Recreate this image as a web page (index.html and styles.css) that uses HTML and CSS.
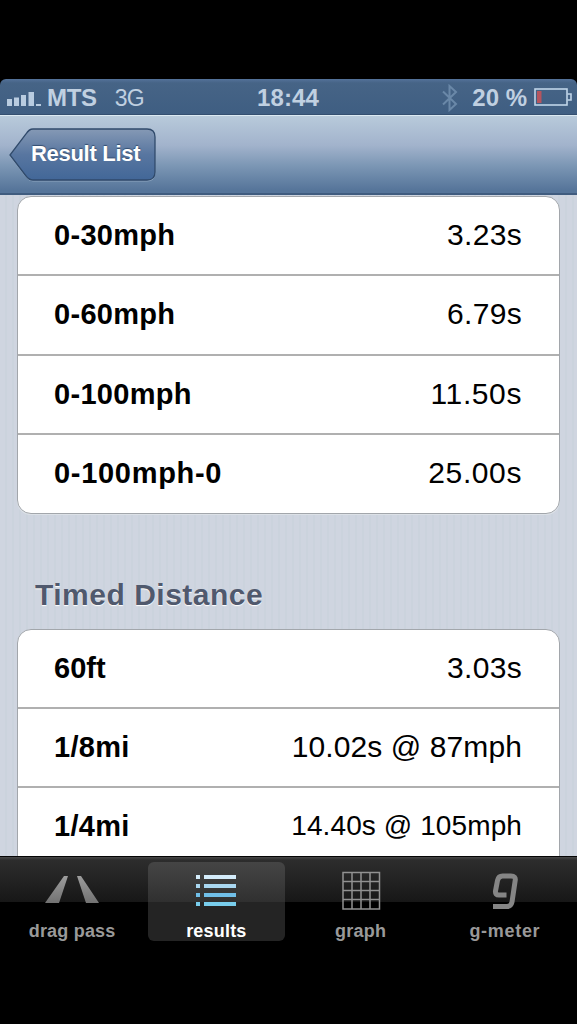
FILE: index.html
```html
<!DOCTYPE html>
<html lang="en">
<head>
    <meta charset="UTF-8">
    <meta name="viewport" content="width=device-width, initial-scale=1.0">
    <title>Results</title>
    <link rel="stylesheet" href="styles.css">
</head>
<body>

    <div class="phone">

        <!-- Status bar -->
        <div class="status">
            <div class="status-left">
                <svg class="signal" width="35" height="16" viewBox="0 0 35 16">
                    <path d="M0 8h5v7H0zM7 6.500h5V15H7zM14 4h5v11h-5zM21.500 1h5.500v14h-5.500zM29 13h5v2h-5z" fill="#b9cce0"/>
                </svg>
                <span class="carrier">MTS</span>
                <span class="network">3G</span>
            </div>
            <span class="clock">18:44</span>
            <div class="status-right">
                <svg class="bluetooth" width="16" height="28" viewBox="0 0 16 28">
                    <path d="M1 7.500l13 12.500-6.500 6V2L14 8 1 20.500" fill="none" stroke="#6a88a8" stroke-width="2"/>
                </svg>
                <span class="percent">20 %</span>
                <svg class="battery" width="38" height="18" viewBox="0 0 38 18">
                    <rect x="1" y="1" width="32" height="16" fill="none" stroke="#c0d5e9" stroke-width="1.600"/>
                    <path d="M33.500 6h3.500v6h-3.500" fill="none" stroke="#c0d5e9" stroke-width="1.600"/>
                    <rect x="3" y="3" width="4.500" height="12" fill="#b5555f"/>
                </svg>
            </div>
        </div>

        <!-- Navigation bar -->
        <div class="navbar">
            <button class="back">
                <svg class="back-shape" width="148" height="54" viewBox="0 0 148 54">
                    <defs>
                        <linearGradient id="backFill" x1="0" y1="0" x2="0" y2="1">
                            <stop offset="0" stop-color="#8599b5"/>
                            <stop offset="0.500" stop-color="#5876a0"/>
                            <stop offset="1" stop-color="#426798"/>
                        </linearGradient>
                    </defs>
                    <path d="M24 2H138Q146 2 146 10V45Q146 53 138 53H24Q20 53 17 49L1 28 17 7Q20 2 24 2Z" fill="none" stroke="#a9bdd2" stroke-opacity="0.600"/>
                    <path d="M24 1H138Q146 1 146 9V44Q146 52 138 52H24Q20 52 17 48L1 27 17 6Q20 1 24 1Z" fill="url(#backFill)" stroke="#304a6b" stroke-width="1.300"/>
                </svg>
                <span class="back-label">Result List</span>
            </button>
        </div>

        <!-- Results -->
        <div class="content">
            <div class="group">
                <div class="row"><span class="label">0-30mph</span><span class="value">3.23s</span></div>
                <div class="row"><span class="label">0-60mph</span><span class="value">6.79s</span></div>
                <div class="row"><span class="label">0-100mph</span><span class="value long">11.50s</span></div>
                <div class="row"><span class="label stop">0-100mph-0</span><span class="value long">25.00s</span></div>
            </div>
            <h2 class="heading">Timed Distance</h2>
            <div class="group">
                <div class="row"><span class="label distance">60ft</span><span class="value">3.03s</span></div>
                <div class="row"><span class="label">1/8mi</span><span class="value speed">10.02s @ 87mph</span></div>
                <div class="row"><span class="label">1/4mi</span><span class="value small">14.40s @ 105mph</span></div>
                <div class="row"></div>
            </div>
        </div>

        <!-- Tab bar -->
        <div class="tabbar">
            <div class="tab">
                <svg class="icon" width="56" height="42" viewBox="0 0 56 42">
                    <defs>
                        <linearGradient id="grey" x1="0" y1="0" x2="0" y2="1">
                            <stop offset="0" stop-color="#9d9d9d"/>
                            <stop offset="1" stop-color="#727272"/>
                        </linearGradient>
                    </defs>
                    <path d="M20 8h4L15 35H1zM33 8h4l18 27H42z" fill="url(#grey)"/>
                </svg>
                <span class="tab-label">drag pass</span>
            </div>
            <div class="tab active">
                <svg class="icon" width="42" height="42" viewBox="0 0 42 42">
                    <path d="M1 7h4v4H1zM9 7h32v4H9z" fill="#d4ecfa"/>
                    <path d="M1 16h4v4H1zM9 16h32v4H9z" fill="#a9d7f0"/>
                    <path d="M1 25h4v4H1zM9 25h32v4H9z" fill="#70bfe8"/>
                    <path d="M1 34h4v4H1zM9 34h32v4H9z" fill="#78cdec"/>
                </svg>
                <span class="tab-label">results</span>
            </div>
            <div class="tab">
                <svg class="icon grid" width="40" height="42" viewBox="0 0 40 42">
                    <path d="M2 4.500h36.500v36.500H2zM11 4.500v36.500M20 4.500v36.500M29 4.500v36.500M2 13.500h36.500M2 22.500h36.500M2 31.500h36.500" fill="none" stroke="#919191" stroke-width="1.500"/>
                </svg>
                <span class="tab-label">graph</span>
            </div>
            <div class="tab">
                <svg class="icon" width="30" height="42" viewBox="0 0 30 42">
                    <path d="M16.500 27H9Q5 27 5.500 23L7.500 12.500Q8.500 8 12.500 8H21Q26 8 25.200 12.500L22 34Q21 38.500 17 38.500H3" fill="none" stroke="#858585" stroke-width="5"/>
                </svg>
                <span class="tab-label meter">g-meter</span>
            </div>
        </div>

    </div>

</body>
</html>
```
FILE: styles.css
```css
* {
    box-sizing: border-box;
}
body {
    margin: 0;
    background-color: #000;
    font-family: "Liberation Sans", Arial, sans-serif;
}
svg {
    flex: none;
}
.phone {
    display: flex;
    flex-direction: column;
    height: 1024px;
    padding-top: 79px;
    overflow: hidden;
}

/* Status bar */
.status {
    display: grid;
    grid-template-columns: 1fr auto 1fr;
    align-items: center;
    height: 36px;
    flex: none;
    padding: 2px 5px 0 7px;
    background: linear-gradient(#54729a 0, #466486 4px, #3f5e82 100%);
    border-bottom: 1px solid #344f70;
    border-radius: 6px 6px 0 0;
    color: #c0d0e1;
    font-size: 24px;
    line-height: 34px;
    font-weight: bold;
}
.status-left,
.status-right {
    display: flex;
    align-items: center;
}
.status-right {
    justify-content: flex-end;
}
.signal {
    margin-top: 2px;
}
.carrier {
    margin-left: 5px;
    letter-spacing: -0.3px;
}
.network {
    margin-left: 18px;
    font-size: 23px;
    font-weight: normal;
    letter-spacing: -0.8px;
}
.clock {
    padding-right: 3px;
    letter-spacing: 0.1px;
}
.percent {
    margin: 0 7px 0 14px;
    letter-spacing: 0;
}
.battery {
    margin-bottom: 2px;
}

/* Navigation bar */
.navbar {
    height: 80px;
    flex: none;
    padding: 12px 9px;
    background: linear-gradient(#b8cadb, #a2b3cc 38%, #7b96b4 65%, #56759a 96%);
    border-top: 1px solid #dbe9f2;
    border-bottom: 2px solid #405c7f;
}
.back {
    display: grid;
    width: 148px;
    height: 54px;
    padding: 0;
    border: none;
    background: none;
    font-family: inherit;
}
.back-shape,
.back-label {
    grid-area: 1 / 1;
}
.back-label {
    padding-left: 22px;
    color: #fff;
    font-size: 22px;
    font-weight: bold;
    line-height: 52px;
    letter-spacing: -0.3px;
    text-align: left;
    white-space: nowrap;
    text-shadow: 0 -1px 1px #334d70;
}

/* Results */
.content {
    flex: 1;
    min-height: 0;
    padding: 1px 17px 0;
    overflow: hidden;
    background: repeating-linear-gradient(90deg, #cfd5e0 0, #cfd5e0 5px, #cbd3dd 5px, #cbd3dd 7px);
}
.group {
    border: 1.5px solid #a2a6ab;
    border-radius: 14px;
    background-color: #fff;
    box-shadow: 0 1px 0 #dce1e7;
}
.row {
    display: flex;
    justify-content: space-between;
    height: 79.4px;
    padding: 0 37px 0 36px;
    border-bottom: 2px solid #b0b0b0;
    line-height: 77px;
    color: #000;
}
.row:last-child {
    height: 78px;
    border-bottom: none;
}
.label {
    font-size: 29px;
    font-weight: bold;
    letter-spacing: 0.3px;
}
.label.stop {
    letter-spacing: 0.7px;
}
.label.distance {
    letter-spacing: 0;
}
.value {
    font-size: 30px;
    line-height: 75px;
    letter-spacing: 0.3px;
}
.value.long {
    letter-spacing: 0.6px;
}
.value.speed {
    letter-spacing: 0.1px;
}
.value.small {
    font-size: 28px;
    letter-spacing: 0.1px;
}
.heading {
    margin: 0;
    height: 114.5px;
    padding: 62px 0 0 18px;
    color: #50596d;
    font-size: 30px;
    line-height: 38px;
    letter-spacing: 0.5px;
    text-shadow: 0 1px 1px #fff;
}

/* Tab bar */
.tabbar {
    display: grid;
    grid-template-columns: repeat(4, 1fr);
    align-items: start;
    height: 168px;
    flex: none;
    padding-top: 5px;
    border-top: 1px solid #050505;
    background: linear-gradient(#484848 0, #2d2d2d 3px, #171717 45px, #000 45px);
}
.tab {
    display: flex;
    flex-direction: column;
    align-items: center;
    height: 79px;
    margin: 0 3.5px;
    padding-top: 6px;
    border-radius: 6px;
    color: #999;
    font-size: 18px;
    font-weight: bold;
}
.tab.active {
    background: linear-gradient(#454545, #303030 40px, #242424 40px);
    color: #fff;
}
.tab-label {
    margin-top: 9px;
    line-height: 24px;
    letter-spacing: 0.2px;
    white-space: nowrap;
}
.tab-label.meter {
    letter-spacing: 0.7px;
}
```
